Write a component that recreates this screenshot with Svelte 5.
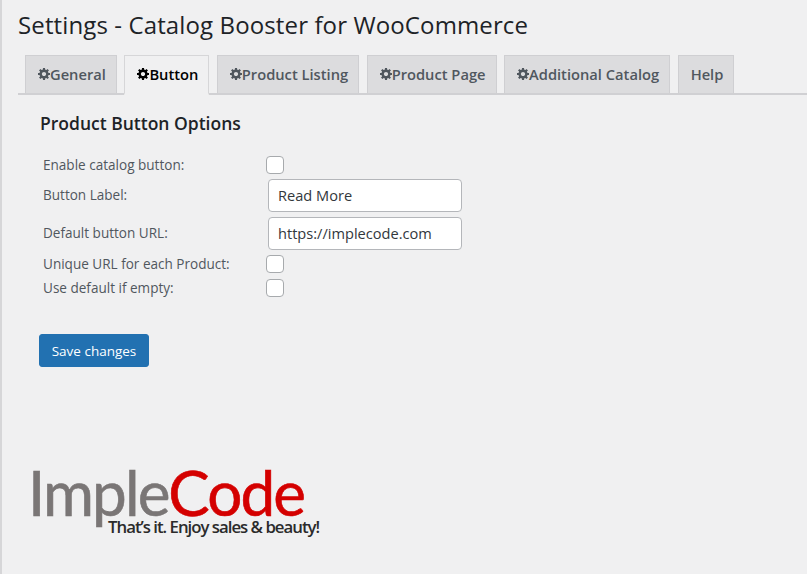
<script>
  const tabs = [
    { label: 'General', gear: true },
    { label: 'Button', gear: true, active: true },
    { label: 'Product Listing', gear: true },
    { label: 'Product Page', gear: true },
    { label: 'Additional Catalog', gear: true },
    { label: 'Help', gear: false }
  ];
</script>

<div class="page">
  <h1>Settings - Catalog Booster for WooCommerce</h1>
  <nav class="tabs">
    {#each tabs as t}
      <div class="tab" class:active={t.active}>
        {#if t.gear}
          <svg class="gear" viewBox="1 2 17 17" width="12" height="12" aria-hidden="true">
            <path fill="currentColor" d="M18 12h-2.18c-.17.7-.44 1.35-.81 1.93l1.54 1.54-2.1 2.1-1.54-1.54c-.58.36-1.23.63-1.91.79V19H8v-2.18c-.68-.16-1.33-.43-1.91-.79l-1.54 1.54-2.12-2.12 1.54-1.54c-.36-.58-.63-1.23-.79-1.91H1V9.03h2.17c.16-.7.44-1.35.8-1.94L2.43 5.55l2.1-2.1 1.54 1.54c.58-.37 1.24-.64 1.93-.81V2h3v2.18c.68.16 1.33.43 1.91.79l1.54-1.54 2.12 2.12-1.54 1.54c.36.59.64 1.24.8 1.94H18V12zm-8.5 1.5c1.66 0 3-1.34 3-3s-1.34-3-3-3-3 1.34-3 3 1.34 3 3 3z"/>
          </svg>
        {/if}
        <span>{t.label}</span>
      </div>
    {/each}
  </nav>

  <section class="panel">
    <h2>Product Button Options</h2>
    <div class="form">
      <div class="row r1"><span class="lbl">Enable catalog button:</span><span class="check"></span></div>
      <div class="row r2"><span class="lbl">Button Label:</span><input class="field" value="Read More" /></div>
      <div class="row r2"><span class="lbl">Default button URL:</span><input class="field" value="https://implecode.com" /></div>
      <div class="row r3"><span class="lbl">Unique URL for each Product:</span><span class="check"></span></div>
      <div class="row r3"><span class="lbl">Use default if empty:</span><span class="check"></span></div>
    </div>
    <button class="save">Save changes</button>
  </section>

  <div class="logo">
    <div class="mark"><span class="imple">Imple</span><span class="code">Code</span></div>
    <div class="tag">That’s it. Enjoy sales &amp; beauty!</div>
  </div>
</div>

<style>
  :global(body) {
    margin: 0;
    background: #f0f0f1;
  }
  .page {
    height: 574px;
    box-sizing: border-box;
    overflow: hidden;
    border-left: 2px solid #d6d6d8;
    padding-left: 16px;
    font-family: "Open Sans", sans-serif;
    color: #1d2327;
  }
  h1 {
    margin: 0;
    padding-top: 10px;
    height: 55px;
    box-sizing: border-box;
    font-size: 24px;
    font-weight: 400;
    line-height: 30px;
    letter-spacing: 0.12px;
    color: #1d2327;
  }
  .tabs {
    display: flex;
    align-items: flex-end;
    height: 40px;
    box-sizing: border-box;
    border-bottom: 2px solid #d0d0d3;
    padding-left: 7px;
    gap: 7.5px;
  }
  .tab {
    display: flex;
    align-items: center;
    height: 40px;
    box-sizing: border-box;
    margin-bottom: -2px;
    padding: 0 10px 1px 12px;
    background: #dcdcde;
    border: 1px solid #cfcfd2;
    border-bottom: 2px solid #d0d0d3;
    color: #50575e;
    font-size: 14.7px;
    font-weight: 600;
  }
  .tab.active {
    background: #f0f0f1;
    border-color: #d6d6d8;
    border-bottom-color: #f0f0f1;
    color: #000;
  }
  .gear {
    flex: none;
  }
  .panel {
    padding: 16px 0 0 22px;
  }
  h2 {
    margin: 0;
    font-size: 17.5px;
    font-weight: 600;
    line-height: 24px;
    color: #1d2327;
  }
  .form {
    margin-top: 19px;
  }
  .row {
    display: flex;
    align-items: center;
    padding-left: 3px;
  }
  .lbl {
    flex: none;
    width: 224px;
    font-size: 13.55px;
    line-height: 18px;
    color: #50575e;
  }
  .r1 { height: 22px; }
  .r2 { height: 38px; }
  .r3 { height: 24px; }
  .check {
    display: block;
    width: 16px;
    height: 16px;
    margin-left: -1px;
    background: #fff;
    border: 1px solid #a7aaad;
    border-radius: 4px;
  }
  .field {
    width: 194px;
    height: 33px;
    box-sizing: border-box;
    margin-left: 1px;
    padding: 0 9px;
    background: #fff;
    border: 1px solid #b4b6ba;
    border-radius: 4px;
    font: 400 14.6px "Open Sans", sans-serif;
    color: #32373c;
    outline: none;
  }
  .save {
    display: block;
    margin: 34px 0 0 -1px;
    width: 110px;
    height: 33px;
    padding: 0;
    background: #2271b1;
    border: 1px solid #2271b1;
    border-radius: 3px;
    color: #fff;
    font: 400 13.5px "Open Sans", sans-serif;
  }
  .logo {
    margin: 90px 0 0 10px;
    width: 300px;
  }
  .mark {
    font-family: Lato, sans-serif;
    font-size: 62px;
    line-height: 70px;
    letter-spacing: -1.9px;
    font-weight: 400;
    -webkit-text-stroke: 0.6px currentColor;
  }
  .imple { color: #7a7676; }
  .code { color: #d40000; }
  .tag {
    margin: -11px 0 0 80px;
    font-family: "Open Sans", sans-serif;
    font-size: 16.8px;
    line-height: 22px;
    font-weight: 600;
    letter-spacing: -1px;
    white-space: nowrap;
    color: #2b2b2b;
  }
</style>
